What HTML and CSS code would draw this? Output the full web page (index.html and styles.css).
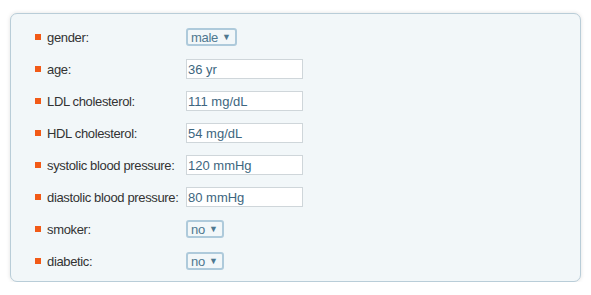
FILE: index.html
```html
<!DOCTYPE html>
<html lang="en">
<head>
    <meta charset="UTF-8">
    <title>Risk factors</title>
    <link rel="stylesheet" href="styles.css">
</head>
<body>
    <div class="panel">
        <div class="row">
            <span class="label">gender:</span>
            <span class="select">male <span class="arrow">&#9660;</span></span>
        </div>
        <div class="row">
            <span class="label">age:</span>
            <input class="field" type="text" value="36 yr">
        </div>
        <div class="row">
            <span class="label">LDL cholesterol:</span>
            <input class="field" type="text" value="111 mg/dL">
        </div>
        <div class="row">
            <span class="label">HDL cholesterol:</span>
            <input class="field" type="text" value="54 mg/dL">
        </div>
        <div class="row">
            <span class="label">systolic blood pressure:</span>
            <input class="field" type="text" value="120 mmHg">
        </div>
        <div class="row">
            <span class="label">diastolic blood pressure:</span>
            <input class="field" type="text" value="80 mmHg">
        </div>
        <div class="row">
            <span class="label">smoker:</span>
            <span class="select">no <span class="arrow">&#9660;</span></span>
        </div>
        <div class="row">
            <span class="label">diabetic:</span>
            <span class="select">no <span class="arrow">&#9660;</span></span>
        </div>
    </div>
</body>
</html>
```

FILE: styles.css
```css
* {
    box-sizing: border-box;
}

body {
    margin: 0;
    padding: 13px 10px 0 10px;
    background-color: #fff;
    font-family: "Liberation Sans", Arial, sans-serif;
    font-size: 13px;
}

.panel {
    width: 571px;
    background-color: #f2f7f9;
    border: 1px solid #b9cdd8;
    border-radius: 7px;
    box-shadow: 0 0 4px rgba(0, 0, 0, 0.12);
    padding: 7px 20px 4px 24px;
}

.row {
    display: grid;
    grid-template-columns: 151px auto;
    align-items: center;
    justify-items: start;
    height: 32px;
}

.label {
    display: flex;
    align-items: center;
    gap: 6px;
    white-space: nowrap;
    color: #333;
    letter-spacing: -0.35px;
}

.label::before {
    content: "";
    width: 6px;
    height: 6px;
    margin-top: -1px;
    background-color: #f25a17;
}

.select {
    display: inline-flex;
    align-items: center;
    gap: 4px;
    height: 18px;
    padding: 0 4px 0 3px;
    border: 2px solid #aecadb;
    border-radius: 3px;
    color: #4e7890;
    letter-spacing: -0.3px;
}

.arrow {
    font-size: 9px;
    letter-spacing: 0;
}

.field {
    width: 117px;
    height: 20px;
    padding: 0 1px;
    border: 1px solid #cfd6da;
    background-color: #fff;
    color: #3d6680;
    font-family: "Liberation Sans", Arial, sans-serif;
    font-size: 13px;
}
```
